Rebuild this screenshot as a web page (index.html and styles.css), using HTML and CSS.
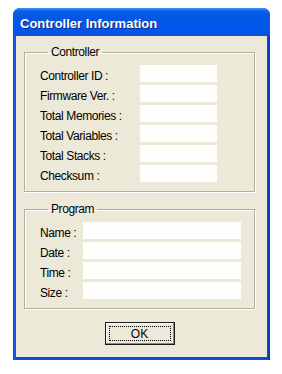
FILE: index.html
```html
<!DOCTYPE html>
<html lang="en">
  <head>
    <meta charset="UTF-8" />
    <title>Controller Information</title>
    <link rel="stylesheet" href="styles.css">
  </head>
  <body>
    <div class="window">
      <div class="titlebar">Controller Information</div>
      <div class="client">
        <fieldset class="group">
          <legend>Controller</legend>
          <div class="rows ctrl">
            <span class="lbl">Controller ID :</span><span class="box"></span>
            <span class="lbl">Firmware Ver. :</span><span class="box"></span>
            <span class="lbl">Total Memories :</span><span class="box"></span>
            <span class="lbl">Total Variables :</span><span class="box"></span>
            <span class="lbl">Total Stacks :</span><span class="box"></span>
            <span class="lbl">Checksum :</span><span class="box"></span>
          </div>
        </fieldset>
        <fieldset class="group prog">
          <legend>Program</legend>
          <div class="rows program">
            <span class="lbl">Name :</span><span class="box"></span>
            <span class="lbl">Date :</span><span class="box"></span>
            <span class="lbl">Time :</span><span class="box"></span>
            <span class="lbl">Size :</span><span class="box"></span>
          </div>
        </fieldset>
        <div class="buttons">
          <button class="okBtn">OK</button>
        </div>
      </div>
    </div>
  </body>
</html>
```
FILE: styles.css
```css
body {
  margin: 0;
  background: #fff;
  font-family: "Liberation Sans", Arial, sans-serif;
  font-size: 12px;
  color: #000;
}

.window {
  margin: 8px 0 0 13px;
  width: 257px;
  height: 352px;
  box-sizing: border-box;
  border-radius: 7px 7px 0 0;
  background: linear-gradient(to right, #0842c8 0, #1666ee 2px, #0a4fd8 3px, #0a4fd8 254px, #0733b8 257px);
  display: flex;
  flex-direction: column;
  overflow: hidden;
}

.titlebar {
  height: 28px;
  line-height: 31px;
  padding-left: 7px;
  color: #fff;
  font-weight: bold;
  font-size: 13px;
  text-shadow: 1px 1px #0a2a8a;
  background: linear-gradient(to bottom, #3d95ff 0, #0a5fe8 3px, #0556e4 10px, #0058ee 20px, #0a52d8 28px);
}

.client {
  flex: 1;
  margin: 0 3px 3px 3px;
  background: #ece9d8;
  padding: 9px 12px 0 8px;
}

.group {
  margin: 0;
  padding: 6px 0 9px 15px;
  border: 1px solid #b2ae9f;
  box-shadow: inset 1px 1px #fff, 1px 1px #fff;
}

.group legend {
  margin-left: 8px;
  padding: 0 3px;
  line-height: 14px;
  letter-spacing: -0.4px;
}

.prog {
  margin-top: 10px;
}

.rows {
  display: grid;
  row-gap: 3px;
}

.ctrl {
  grid-template-columns: 100px 77px;
}

.program {
  grid-template-columns: 43px 158px;
}

.lbl {
  height: 17px;
  line-height: 17px;
  padding-top: 3px;
  box-sizing: border-box;
  white-space: nowrap;
  letter-spacing: -0.4px;
}

.box {
  height: 17px;
  background: #fefefc;
}

.buttons {
  display: flex;
  justify-content: center;
  margin-top: 13px;
}

.okBtn {
  width: 70px;
  height: 23px;
  padding: 0;
  background: #ece9d8;
  border: 1px solid #1a1a1a;
  box-shadow: inset -1px -1px #8c8a80, inset 1px 1px #fff;
  outline: 1px dotted #000;
  outline-offset: -5px;
  font-family: "Liberation Sans", Arial, sans-serif;
  font-size: 12px;
  color: #000;
}
```
